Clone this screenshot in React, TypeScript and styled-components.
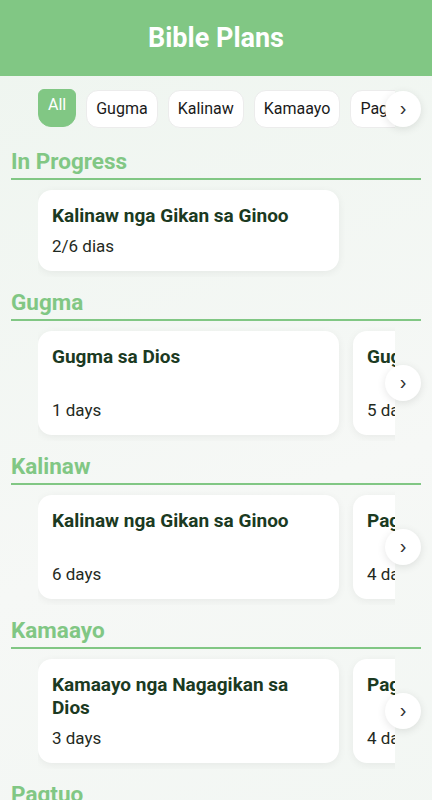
import React from 'react';
import styled, { createGlobalStyle } from 'styled-components';

const GlobalStyle = createGlobalStyle`
  * {
    box-sizing: border-box;
  }

  body {
    margin: 0;
    font-family: 'Roboto', 'Noto Sans', sans-serif;
    background: linear-gradient(160deg, #eef5ef 0%, #f6f8f6 55%, #f1f6f2 100%);
    min-height: 100vh;
  }
`;

const Header = styled.header`
  height: 76px;
  background-color: #81c784;
  display: flex;
  align-items: center;
  justify-content: center;
`;

const Title = styled.h1`
  margin: 0;
  color: #ffffff;
  font-size: 27px;
  font-weight: 700;
`;

const Rail = styled.div`
  position: relative;
  padding: 0 37px 0 38px;
`;

const Scroller = styled.div`
  display: flex;
  gap: ${({ $gap }: { $gap: number }) => $gap}px;
  overflow: hidden;
  padding: 6px 0;
`;

const ChipRail = styled(Rail)`
  margin-top: 8px;
`;

const Chip = styled.button<{ $active?: boolean }>`
  flex: 0 0 auto;
  height: 38px;
  padding: ${({ $active }) => ($active ? '0 9px 6px' : '0 9px')};
  border: 1px solid ${({ $active }) => ($active ? '#81c784' : '#ececec')};
  border-radius: ${({ $active }) => ($active ? '6px 6px 13px 13px' : '12px')};
  background-color: ${({ $active }) => ($active ? '#81c784' : '#ffffff')};
  color: ${({ $active }) => ($active ? '#ffffff' : '#1a1a1a')};
  font-family: 'Roboto', sans-serif;
  font-size: 16px;
  line-height: 1;
  margin-top: ${({ $active }) => ($active ? '-1px' : '0')};
`;

const Arrow = styled.button`
  position: absolute;
  right: 11px;
  top: 50%;
  transform: translateY(-50%);
  width: 36px;
  height: 36px;
  border-radius: 50%;
  border: none;
  background-color: #ffffff;
  box-shadow: 0 2px 8px rgba(0, 0, 0, 0.1);
  color: #333333;
  font-size: 20px;
  line-height: 1;
  padding: 0 0 3px;
  display: flex;
  align-items: center;
  justify-content: center;
`;

const Section = styled.section`
  margin-top: 12px;

  &:first-of-type {
    margin-top: 14px;
  }
`;

const SectionTitle = styled.h2`
  margin: 0 11px 4px;
  padding-bottom: 4px;
  border-bottom: 2px solid #81c784;
  color: #81c784;
  font-size: 22.5px;
  font-weight: 700;
  line-height: 26px;
`;

const Card = styled.div<{ $tall?: boolean }>`
  flex: 0 0 301px;
  min-height: ${({ $tall }) => ($tall ? '104px' : '0')};
  padding: 14px;
  border-radius: 14px;
  background-color: #ffffff;
  box-shadow: 0 2px 8px rgba(0, 0, 0, 0.06);
  display: flex;
  flex-direction: column;
  justify-content: space-between;
  gap: 8px;
`;

const CardTitle = styled.div`
  color: #1b3a22;
  font-size: 19px;
  font-weight: 700;
  line-height: 23px;
`;

const CardMeta = styled.div`
  color: #1f2a22;
  font-size: 17px;
  line-height: 22px;
`;

type Plan = { title: string; meta: string };

const categories: { name: string; plans: Plan[] }[] = [
  {
    name: 'Gugma',
    plans: [
      { title: 'Gugma sa Dios', meta: '1 days' },
      { title: 'Gugma sa Isigkatawo', meta: '5 days' },
    ],
  },
  {
    name: 'Kalinaw',
    plans: [
      { title: 'Kalinaw nga Gikan sa Ginoo', meta: '6 days' },
      { title: 'Pagpangita sa Kalinaw', meta: '4 days' },
    ],
  },
  {
    name: 'Kamaayo',
    plans: [
      { title: 'Kamaayo nga Nagagikan sa Dios', meta: '3 days' },
      { title: 'Pagpakita og Kamaayo', meta: '4 days' },
    ],
  },
  {
    name: 'Pagtuo',
    plans: [
      { title: 'Pagtuo sa Ginoo', meta: '5 days' },
      { title: 'Pagtuo ug Paglaum', meta: '3 days' },
    ],
  },
];

const filters = ['All', 'Gugma', 'Kalinaw', 'Kamaayo', 'Pagtuo'];

const App = () => (
  <>
    <GlobalStyle />
    <Header>
      <Title>Bible Plans</Title>
    </Header>

    <ChipRail>
      <Scroller $gap={10}>
        {filters.map((f) => (
          <Chip key={f} $active={f === 'All'}>
            {f}
          </Chip>
        ))}
      </Scroller>
      <Arrow>›</Arrow>
    </ChipRail>

    <Section>
      <SectionTitle>In Progress</SectionTitle>
      <Rail>
        <Scroller $gap={14}>
          <Card>
            <CardTitle>Kalinaw nga Gikan sa Ginoo</CardTitle>
            <CardMeta>2/6 dias</CardMeta>
          </Card>
        </Scroller>
      </Rail>
    </Section>

    {categories.map((c) => (
      <Section key={c.name}>
        <SectionTitle>{c.name}</SectionTitle>
        <Rail>
          <Scroller $gap={14}>
            {c.plans.map((p) => (
              <Card key={p.title} $tall>
                <CardTitle>{p.title}</CardTitle>
                <CardMeta>{p.meta}</CardMeta>
              </Card>
            ))}
          </Scroller>
          <Arrow>›</Arrow>
        </Rail>
      </Section>
    ))}
  </>
);

export default App;
